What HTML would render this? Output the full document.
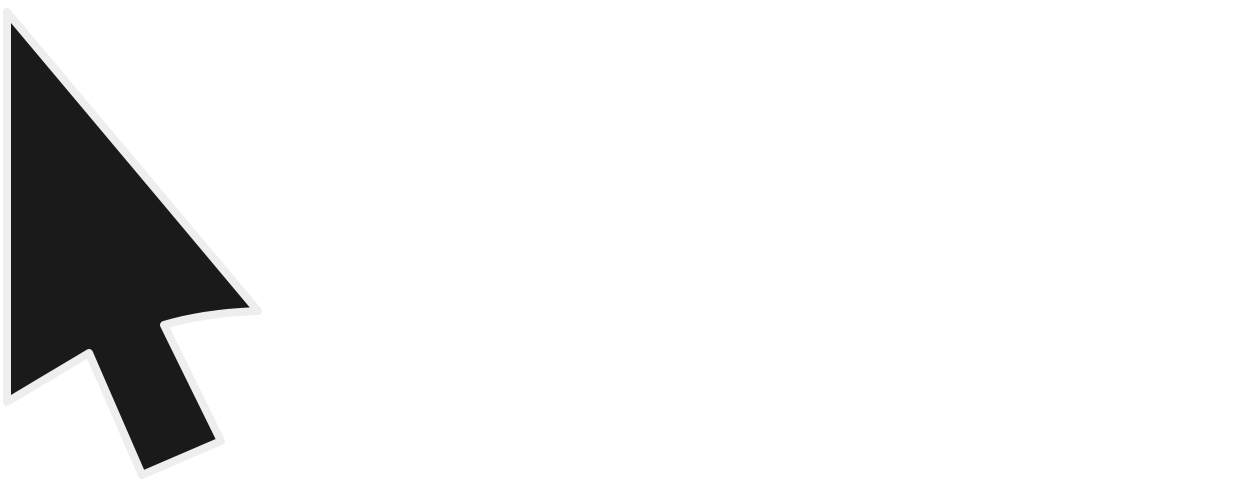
<!DOCTYPE html>
<html><head><style>html,body{margin:0;padding:0;background:#fff;width:1246px;height:481px;overflow:hidden}</style></head>
<body><svg width="1246" height="481" viewBox="0 0 1246 481" style="display:block">
<path d="M7,12 L258,311 Q204,313 164,325 L221,441 L142,475 L89,353 L7,402 Z" fill="#1a1a1a" stroke="#eeeeee" stroke-width="8" stroke-linejoin="round"/>
</svg></body></html>
